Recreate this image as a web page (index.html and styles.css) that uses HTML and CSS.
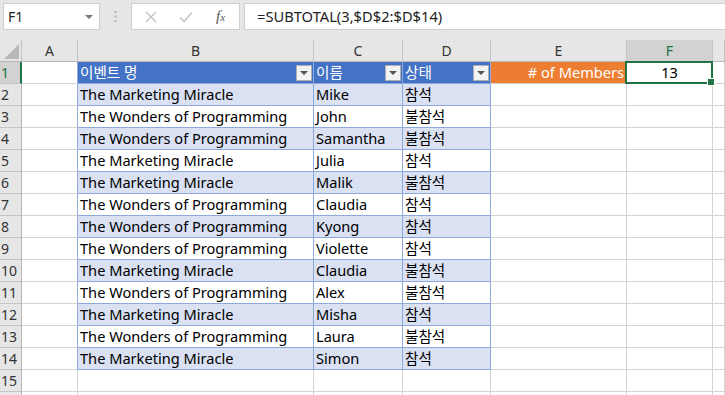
FILE: index.html
```html
<!DOCTYPE html>
<html lang="ko">
<head>
  <meta charset="UTF-8" />
  <title>Event Members</title>
  <link rel="stylesheet" href="styles.css">
</head>
<body>

  <div class="toolbar">
    <div class="namebox">
      <span>F1</span>
      <span class="caret"></span>
    </div>
    <div class="grip">
      <svg width="3" height="11" viewBox="0 0 3 11"><rect x="0.5" y="0" width="2" height="2" fill="#b4b4b4"/><rect x="0.5" y="4.5" width="2" height="2" fill="#b4b4b4"/><rect x="0.5" y="9" width="2" height="2" fill="#b4b4b4"/></svg>
    </div>
    <div class="fxbox">
      <svg class="ico" width="14" height="14" viewBox="0 0 14 14"><path d="M2 2 L12 12 M12 2 L2 12" stroke="#c4c4c4" stroke-width="1.4" fill="none"/></svg>
      <svg class="ico" width="16" height="14" viewBox="0 0 16 14"><path d="M2 7.5 L6 11.5 L14 2.5" stroke="#c4c4c4" stroke-width="1.6" fill="none"/></svg>
      <span class="fx"><i>f</i><small>x</small></span>
    </div>
    <div class="formula">=SUBTOTAL(3,$D$2:$D$14)</div>
  </div>

  <div class="sheet">
    <div class="row hdr">
      <div class="cell rh corner">
        <svg width="15" height="15" viewBox="0 0 15 15"><polygon points="15,0 15,15 0,15" fill="#b8b8b8"/></svg>
      </div>
      <div class="cell a">A</div>
      <div class="cell b">B</div>
      <div class="cell c">C</div>
      <div class="cell d">D</div>
      <div class="cell e">E</div>
      <div class="cell f sel">F</div>
      <div class="cell g"></div>
    </div>

    <div class="row">
      <div class="cell rh sel">1</div>
      <div class="cell a edge"></div>
      <div class="cell b t th"><span>이벤트 명</span><span class="filter"></span></div>
      <div class="cell c t th"><span>이름</span><span class="filter"></span></div>
      <div class="cell d t th"><span>상태</span><span class="filter"></span></div>
      <div class="cell e label"># of Members</div>
      <div class="cell f active">13</div>
      <div class="cell g"></div>
    </div>

    <div class="row band">
      <div class="cell rh">2</div>
      <div class="cell a edge"></div>
      <div class="cell b t">The Marketing Miracle</div>
      <div class="cell c t">Mike</div>
      <div class="cell d t">참석</div>
      <div class="cell e"></div><div class="cell f"></div><div class="cell g"></div>
    </div>
    <div class="row">
      <div class="cell rh">3</div>
      <div class="cell a edge"></div>
      <div class="cell b t">The Wonders of Programming</div>
      <div class="cell c t">John</div>
      <div class="cell d t">불참석</div>
      <div class="cell e"></div><div class="cell f"></div><div class="cell g"></div>
    </div>
    <div class="row band">
      <div class="cell rh">4</div>
      <div class="cell a edge"></div>
      <div class="cell b t">The Wonders of Programming</div>
      <div class="cell c t">Samantha</div>
      <div class="cell d t">불참석</div>
      <div class="cell e"></div><div class="cell f"></div><div class="cell g"></div>
    </div>
    <div class="row">
      <div class="cell rh">5</div>
      <div class="cell a edge"></div>
      <div class="cell b t">The Marketing Miracle</div>
      <div class="cell c t">Julia</div>
      <div class="cell d t">참석</div>
      <div class="cell e"></div><div class="cell f"></div><div class="cell g"></div>
    </div>
    <div class="row band">
      <div class="cell rh">6</div>
      <div class="cell a edge"></div>
      <div class="cell b t">The Marketing Miracle</div>
      <div class="cell c t">Malik</div>
      <div class="cell d t">불참석</div>
      <div class="cell e"></div><div class="cell f"></div><div class="cell g"></div>
    </div>
    <div class="row">
      <div class="cell rh">7</div>
      <div class="cell a edge"></div>
      <div class="cell b t">The Wonders of Programming</div>
      <div class="cell c t">Claudia</div>
      <div class="cell d t">참석</div>
      <div class="cell e"></div><div class="cell f"></div><div class="cell g"></div>
    </div>
    <div class="row band">
      <div class="cell rh">8</div>
      <div class="cell a edge"></div>
      <div class="cell b t">The Wonders of Programming</div>
      <div class="cell c t">Kyong</div>
      <div class="cell d t">참석</div>
      <div class="cell e"></div><div class="cell f"></div><div class="cell g"></div>
    </div>
    <div class="row">
      <div class="cell rh">9</div>
      <div class="cell a edge"></div>
      <div class="cell b t">The Wonders of Programming</div>
      <div class="cell c t">Violette</div>
      <div class="cell d t">참석</div>
      <div class="cell e"></div><div class="cell f"></div><div class="cell g"></div>
    </div>
    <div class="row band">
      <div class="cell rh">10</div>
      <div class="cell a edge"></div>
      <div class="cell b t">The Marketing Miracle</div>
      <div class="cell c t">Claudia</div>
      <div class="cell d t">불참석</div>
      <div class="cell e"></div><div class="cell f"></div><div class="cell g"></div>
    </div>
    <div class="row">
      <div class="cell rh">11</div>
      <div class="cell a edge"></div>
      <div class="cell b t">The Wonders of Programming</div>
      <div class="cell c t">Alex</div>
      <div class="cell d t">불참석</div>
      <div class="cell e"></div><div class="cell f"></div><div class="cell g"></div>
    </div>
    <div class="row band">
      <div class="cell rh">12</div>
      <div class="cell a edge"></div>
      <div class="cell b t">The Marketing Miracle</div>
      <div class="cell c t">Misha</div>
      <div class="cell d t">참석</div>
      <div class="cell e"></div><div class="cell f"></div><div class="cell g"></div>
    </div>
    <div class="row">
      <div class="cell rh">13</div>
      <div class="cell a edge"></div>
      <div class="cell b t">The Wonders of Programming</div>
      <div class="cell c t">Laura</div>
      <div class="cell d t">불참석</div>
      <div class="cell e"></div><div class="cell f"></div><div class="cell g"></div>
    </div>
    <div class="row band">
      <div class="cell rh">14</div>
      <div class="cell a edge"></div>
      <div class="cell b t">The Marketing Miracle</div>
      <div class="cell c t">Simon</div>
      <div class="cell d t">참석</div>
      <div class="cell e"></div><div class="cell f"></div><div class="cell g"></div>
    </div>
    <div class="row">
      <div class="cell rh">15</div>
      <div class="cell a"></div><div class="cell b"></div><div class="cell c"></div><div class="cell d"></div>
      <div class="cell e"></div><div class="cell f"></div><div class="cell g"></div>
    </div>
    <div class="row">
      <div class="cell rh"></div>
      <div class="cell a"></div><div class="cell b"></div><div class="cell c"></div><div class="cell d"></div>
      <div class="cell e"></div><div class="cell f"></div><div class="cell g"></div>
    </div>
  </div>

</body>
</html>
```

FILE: styles.css
```css
:root {
  --grid: #d4d4d4;
  --head-bg: #e6e6e6;
  --head-line: #c4c4c4;
  --sel-bg: #d2d2d2;
  --green: #217346;
  --tbl-head: #4472c4;
  --tbl-band: #d9e1f2;
  --tbl-line: #8ea9db;
  --orange: #ed7d31;
}

* {
  margin: 0;
  padding: 0;
  box-sizing: border-box;
}

body {
  font-family: "Noto Sans", "Noto Sans CJK KR", sans-serif;
  font-size: 14.6px;
  color: #000;
  background: #fff;
  overflow: hidden;
}

/* formula bar */
.toolbar {
  height: 40px;
  background: var(--head-bg);
  display: flex;
  align-items: flex-start;
  padding: 3px 0 0 3px;
}

.namebox {
  width: 97px;
  height: 27px;
  background: #fff;
  border: 1px solid #d0d0d0;
  display: flex;
  align-items: center;
  justify-content: space-between;
  padding: 0 6px 0 4px;
  font-size: 14px;
  color: #222;
}

.caret {
  width: 0;
  height: 0;
  border-left: 4px solid transparent;
  border-right: 4px solid transparent;
  border-top: 4px solid #777;
}

.grip {
  width: 31px;
  height: 27px;
  display: flex;
  align-items: center;
  justify-content: center;
}

.fxbox {
  width: 109px;
  height: 27px;
  background: #fff;
  border: 1px solid #d0d0d0;
  display: flex;
  align-items: center;
  padding-left: 12px;
  gap: 20px;
}

.fx {
  font-family: "Liberation Serif", serif;
  color: #555;
  font-size: 15px;
  margin-left: 2px;
}

.fx small {
  font-size: 11px;
  font-style: italic;
}

.formula {
  flex: 1;
  margin-left: 4px;
  height: 27px;
  background: #fff;
  border: 1px solid #d0d0d0;
  border-right: none;
  padding-left: 12px;
  line-height: 25px;
  font-size: 14.7px;
  color: #222;
}

/* grid */
.row {
  display: flex;
  height: 22px;
}

.cell {
  height: 22px;
  border-right: 1px solid var(--grid);
  border-bottom: 1px solid var(--grid);
  padding: 0 2px;
  line-height: 21px;
  white-space: nowrap;
  overflow: hidden;
  position: relative;
}

.rh { width: 22px; padding: 0 0 0 1px; }
.a { width: 56px; }
.b { width: 236px; }
.c { width: 89px; }
.d { width: 88px; }
.e { width: 136px; }
.f { width: 86px; overflow: visible; }
.g { flex: 1; }

.rh {
  background: var(--head-bg);
  color: #333;
  font-size: 14px;
  border-right-color: #b8b8b8;
  border-bottom-color: var(--head-line);
}

.hdr .cell {
  background: var(--head-bg);
  text-align: center;
  color: #333;
  font-size: 14px;
  border-right-color: var(--head-line);
  border-bottom-color: #b8b8b8;
}

.hdr .corner {
  display: flex;
  align-items: flex-end;
  justify-content: flex-end;
  padding: 0 2px 2px 0;
}

.hdr .cell.sel,
.rh.sel {
  background: var(--sel-bg);
  color: var(--green);
}

.rh.sel {
  border-right: 2px solid var(--green);
}

/* table */
.a.edge { border-right-color: var(--tbl-line); }

.t { border-color: var(--tbl-line); }

.band .t { background: var(--tbl-band); }

.th {
  background: var(--tbl-head);
  color: #fff;
  display: flex;
  align-items: center;
  justify-content: space-between;
  padding-right: 1px;
}

.filter {
  width: 16px;
  height: 16px;
  background: #f3f3f3;
  border: 1px solid #b0b0b0;
  display: flex;
  align-items: center;
  justify-content: center;
}

.filter::before {
  content: "";
  border-left: 4px solid transparent;
  border-right: 4px solid transparent;
  border-top: 4px solid #555;
  margin-top: 1px;
}

.label {
  background: var(--orange);
  color: #fff;
  text-align: right;
}

.active {
  text-align: center;
}

/* selection outline over F1 */
.active::after {
  content: "";
  position: absolute;
  top: -1px;
  left: -2px;
  right: -1px;
  bottom: -1px;
  border: 2px solid var(--green);
}

.active::before {
  content: "";
  position: absolute;
  right: -3px;
  bottom: -3px;
  width: 6px;
  height: 6px;
  background: var(--green);
  border: 1px solid #fff;
  z-index: 1;
}
```
